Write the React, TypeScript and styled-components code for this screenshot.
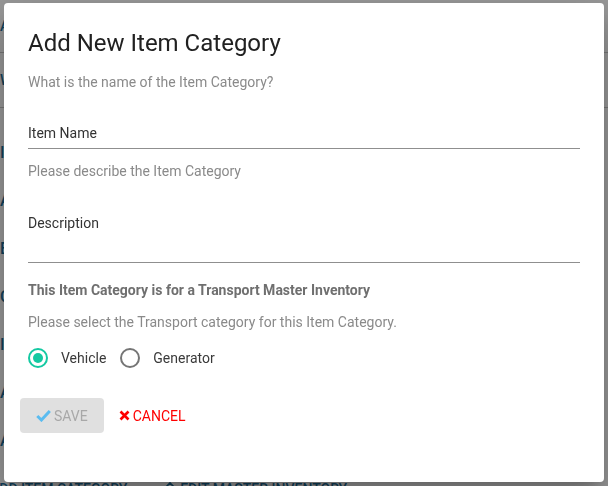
import React from "react";
import styled, { createGlobalStyle } from "styled-components";

const Global = createGlobalStyle`
  html, body { margin: 0; padding: 0; background: #fff; }
  body { font-family: Roboto, "Noto Sans", sans-serif; overflow: hidden; }
  * { box-sizing: border-box; }
`;

/* ---------- background page ---------- */
const Page = styled.div`
  width: 608px;
  height: 486px;
  display: flex;
  flex-direction: column;
  overflow: hidden;
`;
const HeaderRow = styled.div<{ $h: number }>`
  height: ${(p) => p.$h}px;
  flex-shrink: 0;
  border-bottom: 1px solid #c8c8c8;
  display: flex;
  align-items: center;
  color: #1b6c98;
  font-size: 14px;
  font-weight: 500;
`;
const SideList = styled.div`
  display: flex;
  flex-direction: column;
  padding-top: 20px;
  flex: 1;
  min-height: 0;
  overflow: hidden;
`;
const SideItem = styled.div`
  height: 48px;
  flex-shrink: 0;
  display: flex;
  align-items: center;
  color: #1b6c98;
  font-size: 16px;
  font-weight: 500;
`;
const BottomBar = styled.div`
  display: flex;
  gap: 33px;
  margin-left: -10px;
  height: 5px;
  flex-shrink: 0;
  align-items: flex-start;
  color: #1b6c98;
  font-size: 14px;
  line-height: 16px;
  font-weight: 500;
`;
const BottomLink = styled.span`
  display: inline-flex;
  align-items: center;
  gap: 4px;
  white-space: nowrap;
`;

/* ---------- modal ---------- */
const Overlay = styled.div`
  position: fixed;
  inset: 0;
  background: rgba(0, 0, 0, 0.4);
`;
const Dialog = styled.div`
  position: fixed;
  left: 4px;
  top: 3px;
  width: 600px;
  height: 479px;
  background: #fff;
  border-radius: 4px;
  box-shadow: 0 11px 15px -7px rgba(0, 0, 0, 0.2),
    0 24px 38px 3px rgba(0, 0, 0, 0.14), 0 9px 46px 8px rgba(0, 0, 0, 0.12);
  padding: 24px 24px 0 24px;
  display: flex;
  flex-direction: column;
`;
const Title = styled.h2`
  margin: 0;
  font-size: 24px;
  line-height: 32px;
  font-weight: 400;
  color: #212121;
`;
const Hint = styled.p<{ $mt: number }>`
  margin: ${(p) => p.$mt}px 0 0 0;
  font-size: 14px;
  line-height: 20px;
  color: #8a8a8a;
`;
const Strong = styled.p<{ $mt: number }>`
  margin: ${(p) => p.$mt}px 0 0 0;
  font-size: 14px;
  line-height: 20px;
  font-weight: 700;
  color: #6f6f6f;
`;
const Field = styled.div<{ $mt: number; $pb: number }>`
  margin-top: ${(p) => p.$mt}px;
  padding-bottom: ${(p) => p.$pb}px;
  border-bottom: 1px solid #8f8f8f;
  font-size: 14px;
  line-height: 20px;
  color: #333;
`;
const RadioRow = styled.div`
  margin-top: 14px;
  height: 24px;
  display: flex;
  align-items: center;
`;
const RadioOption = styled.label`
  display: inline-flex;
  align-items: center;
  gap: 13px;
  margin-right: 14px;
  font-size: 14px;
  color: #3a3a3a;
`;
const RadioCircle = styled.span<{ $on?: boolean }>`
  width: 20px;
  height: 20px;
  border-radius: 50%;
  border: 2px solid ${(p) => (p.$on ? "#14c9a2" : "#757575")};
  display: inline-flex;
  align-items: center;
  justify-content: center;
  &::after {
    content: "";
    width: 10px;
    height: 10px;
    border-radius: 50%;
    background: ${(p) => (p.$on ? "#14c9a2" : "transparent")};
  }
`;
const Actions = styled.div`
  margin-top: 28px;
  margin-left: -8px;
  display: flex;
  align-items: center;
`;
const Button = styled.button<{ $variant: "disabled" | "danger" }>`
  height: 35px;
  padding: 0 16px;
  border: none;
  border-radius: 4px;
  background: ${(p) => (p.$variant === "disabled" ? "#e0e0e0" : "transparent")};
  color: ${(p) => (p.$variant === "disabled" ? "#a8a8a8" : "#ff0000")};
  font-family: Roboto, sans-serif;
  font-size: 14px;
  font-weight: 400;
  text-transform: uppercase;
  display: inline-flex;
  align-items: center;
  gap: 3px;
`;
const CancelButton = styled(Button)`
  padding-left: 15px;
`;

const Check = () => (
  <svg width="15" height="13" viewBox="0 0 15 13">
    <path d="M1.3 7 L5.4 11 L13.8 2" stroke="#5bbcf0" strokeWidth="3" fill="none" />
  </svg>
);
const Cross = () => (
  <svg width="11" height="11" viewBox="0 0 11 11">
    <path d="M1.5 1.5 L9.5 9.5 M9.5 1.5 L1.5 9.5" stroke="#ff0000" strokeWidth="2.6" fill="none" />
  </svg>
);
const Pencil = () => (
  <svg width="16" height="16" viewBox="0 0 16 16">
    <path d="M2 13 L2 10 L10 2 L13 5 L5 13 Z M1 15 H15" stroke="#1b6c98" strokeWidth="1.6" fill="none" />
  </svg>
);

export default function App() {
  return (
    <>
      <Global />
      <Page>
        <HeaderRow $h={53}>AP</HeaderRow>
        <HeaderRow $h={55}>WORK</HeaderRow>
        <SideList>
          <SideItem>I</SideItem>
          <SideItem>A</SideItem>
          <SideItem>E</SideItem>
          <SideItem>C</SideItem>
          <SideItem>I</SideItem>
          <SideItem>A</SideItem>
          <SideItem>A</SideItem>
        </SideList>
        <BottomBar>
          <BottomLink>ADD ITEM CATEGORY</BottomLink>
          <BottomLink>
            <Pencil />
            EDIT MASTER INVENTORY
          </BottomLink>
        </BottomBar>
      </Page>
      <Overlay />
      <Dialog role="dialog">
        <Title>Add New Item Category</Title>
        <Hint $mt={13}>What is the name of the Item Category?</Hint>
        <Field $mt={31} $pb={5}>Item Name</Field>
        <Hint $mt={12}>Please describe the Item Category</Hint>
        <Field $mt={32} $pb={29}>Description</Field>
        <Strong $mt={17}>This Item Category is for a Transport Master Inventory</Strong>
        <Hint $mt={12}>Please select the Transport category for this Item Category.</Hint>
        <RadioRow>
          <RadioOption>
            <RadioCircle $on />
            Vehicle
          </RadioOption>
          <RadioOption>
            <RadioCircle />
            Generator
          </RadioOption>
        </RadioRow>
        <Actions>
          <Button $variant="disabled" disabled>
            <Check />
            Save
          </Button>
          <CancelButton $variant="danger">
            <Cross />
            Cancel
          </CancelButton>
        </Actions>
      </Dialog>
    </>
  );
}
